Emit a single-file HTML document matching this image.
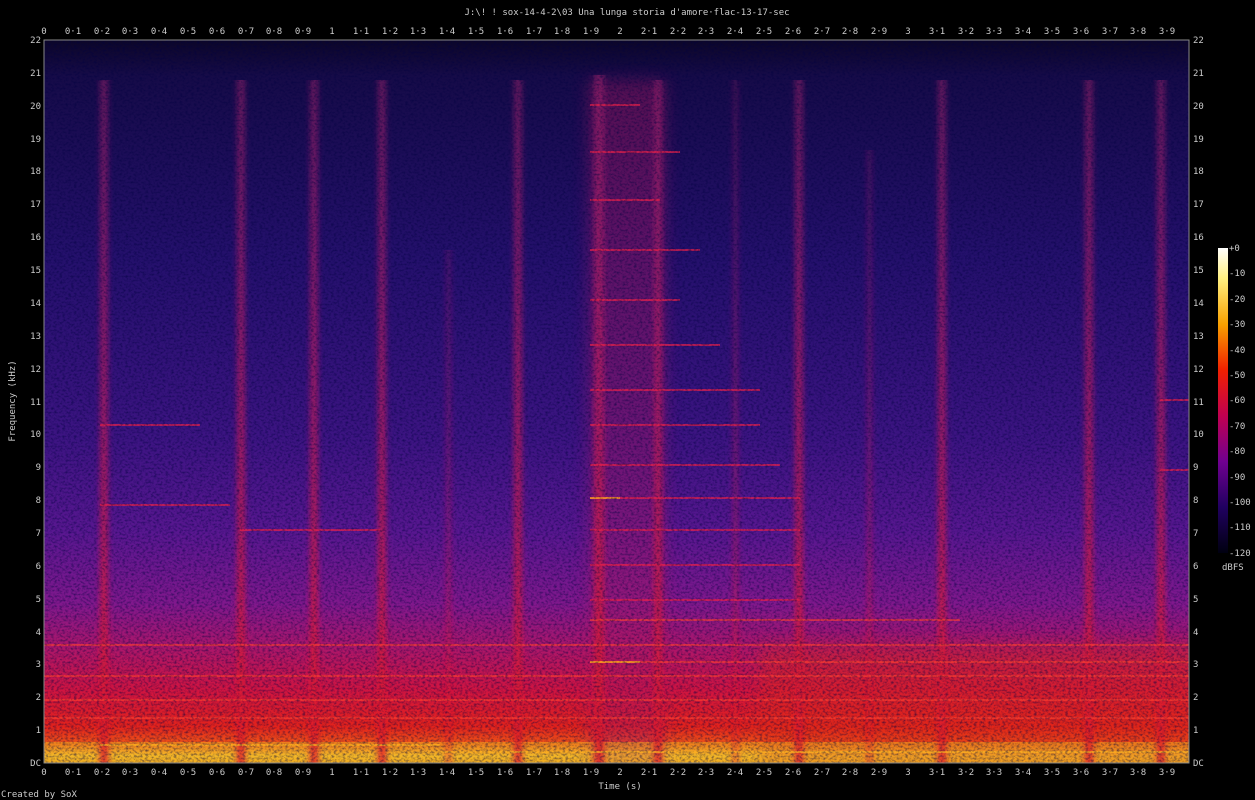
<!DOCTYPE html>
<html><head><meta charset="utf-8"><style>
html,body{margin:0;padding:0;background:#000;width:1255px;height:800px;overflow:hidden}
svg{display:block}
text{font-family:"DejaVu Sans Mono","Liberation Mono",monospace;font-size:9px;fill:#ccc}
</style></head><body>
<svg width="1255" height="800" viewBox="0 0 1255 800" xmlns="http://www.w3.org/2000/svg">
<defs>
<linearGradient id="bg" x1="0" y1="40" x2="0" y2="763" gradientUnits="userSpaceOnUse">
<stop offset="0" stop-color="#0c0628"/>
<stop offset="0.05" stop-color="#160b48"/>
<stop offset="0.3" stop-color="#24106c"/>
<stop offset="0.55" stop-color="#3c1482"/>
<stop offset="0.68" stop-color="#581790"/>
<stop offset="0.78" stop-color="#80188c"/>
<stop offset="0.84" stop-color="#ac166a"/>
<stop offset="0.9" stop-color="#d01440"/>
<stop offset="0.95" stop-color="#e2221c"/>
<stop offset="0.975" stop-color="#f05818"/>
<stop offset="0.99" stop-color="#f8c030"/>
<stop offset="1" stop-color="#f2a820"/>
</linearGradient>
<linearGradient id="st" x1="0" y1="0" x2="0" y2="1">
<stop offset="0" stop-color="#b02070" stop-opacity="0.5"/>
<stop offset="0.5" stop-color="#c01858" stop-opacity="0.75"/>
<stop offset="1" stop-color="#e01828" stop-opacity="0.85"/>
</linearGradient>
<linearGradient id="cb" x1="0" y1="0" x2="0" y2="1">
<stop offset="0" stop-color="#ffffff"/>
<stop offset="0.1" stop-color="#fff080"/>
<stop offset="0.25" stop-color="#f8a000"/>
<stop offset="0.4" stop-color="#f02000"/>
<stop offset="0.55" stop-color="#c00050"/>
<stop offset="0.7" stop-color="#700090"/>
<stop offset="0.85" stop-color="#200060"/>
<stop offset="1" stop-color="#000010"/>
</linearGradient>
<filter id="bl" x="-2" y="0" width="5" height="1"><feGaussianBlur stdDeviation="3 0"/></filter>
<filter id="bb" x="-0.2" y="-0.2" width="1.4" height="1.4"><feGaussianBlur stdDeviation="8"/></filter>
<filter id="nz" x="0" y="0" width="1" height="1">
<feTurbulence type="fractalNoise" baseFrequency="0.35 0.5" numOctaves="2" seed="3"/>
<feColorMatrix type="matrix" values="0 0 0 0 0  0 0 0 0 0  0 0 0 0 0.05  0 0 0 -1.2 0.7"/>
</filter>
<clipPath id="pc"><rect x="44" y="40" width="1145" height="723"/></clipPath>
</defs>
<g clip-path="url(#pc)">
<rect x="44" y="40" width="1145" height="723" fill="url(#bg)"/>
<rect x="588" y="80" width="78" height="683" fill="#b01660" opacity="0.4" filter="url(#bb)"/>
<rect x="760" y="645" width="440" height="120" fill="#e02a18" opacity="0.4" filter="url(#bb)"/>
<rect x="44" y="742" width="1145" height="21" fill="#f0b020" opacity="0.5"/>
<g filter="url(#bl)" fill="url(#st)">
<rect x="100" y="80" width="8" height="683"/>
<rect x="237" y="80" width="8" height="683"/>
<rect x="310" y="80" width="8" height="683"/>
<rect x="378" y="80" width="8" height="683"/>
<rect x="514" y="80" width="8" height="683"/>
<rect x="594" y="75" width="10" height="688"/>
<rect x="654" y="80" width="8" height="683"/>
<rect x="795" y="80" width="8" height="683"/>
<rect x="938" y="80" width="8" height="683"/>
<rect x="1085" y="80" width="8" height="683"/>
<rect x="1157" y="80" width="8" height="683"/>
<rect x="446" y="250" width="5" height="513" opacity="0.6"/>
<rect x="733" y="80" width="5" height="683" opacity="0.6"/>
<rect x="867" y="150" width="5" height="613" opacity="0.6"/>
</g>
<g stroke="#e8204a" stroke-width="2" opacity="0.7">
<line x1="590" y1="105" x2="640" y2="105"/><line x1="590" y1="152" x2="680" y2="152"/>
<line x1="590" y1="200" x2="660" y2="200"/><line x1="590" y1="250" x2="700" y2="250"/>
<line x1="590" y1="300" x2="680" y2="300"/><line x1="590" y1="345" x2="720" y2="345"/>
<line x1="590" y1="390" x2="760" y2="390"/><line x1="590" y1="425" x2="760" y2="425"/>
<line x1="590" y1="465" x2="780" y2="465"/><line x1="590" y1="498" x2="800" y2="498"/>
<line x1="590" y1="530" x2="800" y2="530"/><line x1="590" y1="565" x2="800" y2="565"/>
<line x1="590" y1="600" x2="800" y2="600"/><line x1="100" y1="505" x2="230" y2="505"/>
<line x1="100" y1="425" x2="200" y2="425"/><line x1="240" y1="530" x2="380" y2="530"/>
<line x1="1160" y1="400" x2="1189" y2="400"/><line x1="1160" y1="470" x2="1189" y2="470"/>
</g>
<g stroke="#ff4030" stroke-width="2" opacity="0.6">
<line x1="44" y1="645" x2="1189" y2="645"/><line x1="44" y1="676" x2="1189" y2="676"/>
<line x1="44" y1="700" x2="1189" y2="700"/><line x1="44" y1="718" x2="1189" y2="718"/>
<line x1="590" y1="662" x2="1189" y2="662"/><line x1="590" y1="620" x2="960" y2="620"/>
</g>
<g stroke="#ffb020" stroke-width="2" opacity="0.7">
<line x1="100" y1="745" x2="440" y2="745"/><line x1="590" y1="662" x2="640" y2="662"/>
<line x1="590" y1="498" x2="620" y2="498"/><line x1="440" y1="752" x2="1189" y2="752"/>
</g>
<rect x="44" y="40" width="1145" height="723" filter="url(#nz)"/>
</g>
<rect x="44" y="40" width="1145" height="723" fill="none" stroke="#888" stroke-width="1"/>
<text x="627" y="15" text-anchor="middle">J:\! ! sox-14-4-2\03 Una lunga storia d'amore·flac-13-17-sec</text>
<g text-anchor="middle">
<g transform="translate(0,34)">
<text x="44">0</text><text x="73">0·1</text><text x="102">0·2</text><text x="130">0·3</text><text x="159">0·4</text><text x="188">0·5</text><text x="217">0·6</text><text x="246">0·7</text><text x="274">0·8</text><text x="303">0·9</text><text x="332">1</text><text x="361">1·1</text><text x="390">1·2</text><text x="418">1·3</text><text x="447">1·4</text><text x="476">1·5</text><text x="505">1·6</text><text x="534">1·7</text><text x="562">1·8</text><text x="591">1·9</text><text x="620">2</text><text x="649">2·1</text><text x="678">2·2</text><text x="706">2·3</text><text x="735">2·4</text><text x="764">2·5</text><text x="793">2·6</text><text x="822">2·7</text><text x="850">2·8</text><text x="879">2·9</text><text x="908">3</text><text x="937">3·1</text><text x="966">3·2</text><text x="994">3·3</text><text x="1023">3·4</text><text x="1052">3·5</text><text x="1081">3·6</text><text x="1110">3·7</text><text x="1138">3·8</text><text x="1167">3·9</text>
</g>
<g transform="translate(0,775)">
<text x="44">0</text><text x="73">0·1</text><text x="102">0·2</text><text x="130">0·3</text><text x="159">0·4</text><text x="188">0·5</text><text x="217">0·6</text><text x="246">0·7</text><text x="274">0·8</text><text x="303">0·9</text><text x="332">1</text><text x="361">1·1</text><text x="390">1·2</text><text x="418">1·3</text><text x="447">1·4</text><text x="476">1·5</text><text x="505">1·6</text><text x="534">1·7</text><text x="562">1·8</text><text x="591">1·9</text><text x="620">2</text><text x="649">2·1</text><text x="678">2·2</text><text x="706">2·3</text><text x="735">2·4</text><text x="764">2·5</text><text x="793">2·6</text><text x="822">2·7</text><text x="850">2·8</text><text x="879">2·9</text><text x="908">3</text><text x="937">3·1</text><text x="966">3·2</text><text x="994">3·3</text><text x="1023">3·4</text><text x="1052">3·5</text><text x="1081">3·6</text><text x="1110">3·7</text><text x="1138">3·8</text><text x="1167">3·9</text>
</g>
<text x="620" y="789">Time (s)</text>
</g>
<g text-anchor="end" transform="translate(41,3)">
<text y="40">22</text><text y="73">21</text><text y="106">20</text><text y="139">19</text><text y="171">18</text><text y="204">17</text><text y="237">16</text><text y="270">15</text><text y="303">14</text><text y="336">13</text><text y="369">12</text><text y="402">11</text><text y="434">10</text><text y="467">9</text><text y="500">8</text><text y="533">7</text><text y="566">6</text><text y="599">5</text><text y="632">4</text><text y="664">3</text><text y="697">2</text><text y="730">1</text><text y="763">DC</text>
</g>
<g transform="translate(1193,3)">
<text y="40">22</text><text y="73">21</text><text y="106">20</text><text y="139">19</text><text y="171">18</text><text y="204">17</text><text y="237">16</text><text y="270">15</text><text y="303">14</text><text y="336">13</text><text y="369">12</text><text y="402">11</text><text y="434">10</text><text y="467">9</text><text y="500">8</text><text y="533">7</text><text y="566">6</text><text y="599">5</text><text y="632">4</text><text y="664">3</text><text y="697">2</text><text y="730">1</text><text y="763">DC</text>
</g>
<text transform="translate(15,401) rotate(-90)" text-anchor="middle">Frequency (kHz)</text>
<rect x="1218" y="248" width="10" height="305" fill="url(#cb)"/>
<g transform="translate(1229,3)">
<text y="248">+0</text><text y="273">-10</text><text y="299">-20</text><text y="324">-30</text><text y="350">-40</text><text y="375">-50</text><text y="400">-60</text><text y="426">-70</text><text y="451">-80</text><text y="477">-90</text><text y="502">-100</text><text y="527">-110</text><text y="553">-120</text>
</g>
<text x="1222" y="570">dBFS</text>
<text x="1" y="797">Created by SoX</text>
</svg>
</body></html>
